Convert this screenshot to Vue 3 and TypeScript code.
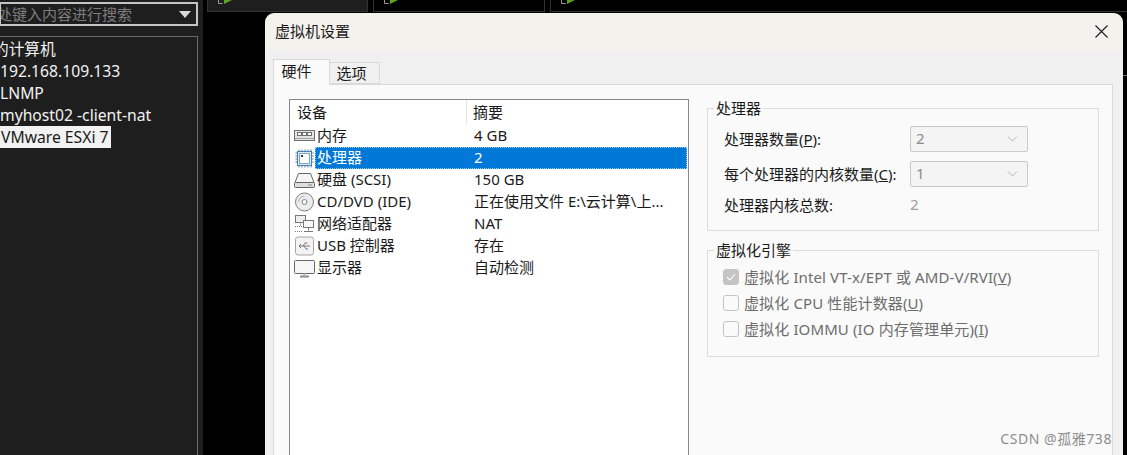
<script setup lang="ts">
const machines = ['192.168.109.133', 'LNMP', 'myhost02 -client-nat']
const rows = [
  { icon: 'mem', name: '内存', sum: '4 GB' },
  { icon: 'cpu', name: '处理器', sum: '2', sel: true },
  { icon: 'disk', name: '硬盘 (SCSI)', sum: '150 GB' },
  { icon: 'cd', name: 'CD/DVD (IDE)', sum: '正在使用文件 E:\\云计算\\上...' },
  { icon: 'net', name: '网络适配器', sum: 'NAT' },
  { icon: 'usb', name: 'USB 控制器', sum: '存在' },
  { icon: 'mon', name: '显示器', sum: '自动检测' },
]
</script>

<template>
  <div class="page">
    <aside class="side">
      <div class="search">
        <span class="search-text">处键入内容进行搜索</span>
        <span class="tri"></span>
      </div>
      <div class="tree">
        <div class="tree-row first">的计算机</div>
        <div v-for="m in machines" :key="m" class="tree-row">{{ m }}</div>
        <div class="tree-row"><span class="picked">VMware ESXi 7</span></div>
      </div>
    </aside>
    <main class="desk">
      <div class="strip">
        <div class="thumb t1"><svg width="16" height="5" viewBox="0 0 16 5"><path d="M.5 0v3.5h4" fill="none" stroke="#9a9a9a"/><path d="M6 0h8L6 4z" fill="#5da423"/></svg></div>
        <div class="thumb t2"><svg width="16" height="5" viewBox="0 0 16 5"><path d="M.5 0v3.5h4" fill="none" stroke="#9a9a9a"/><path d="M6 0h8L6 4z" fill="#5da423"/></svg></div>
        <div class="thumb t3"><svg width="16" height="5" viewBox="0 0 16 5"><path d="M.5 0v3.5h4" fill="none" stroke="#9a9a9a"/><path d="M6 0h8L6 4z" fill="#5da423"/></svg></div>
      </div>
      <section class="dialog">
        <header class="title">
          <span>虚拟机设置</span>
          <svg class="close" width="13" height="13" viewBox="0 0 13 13"><path d="M.5.5l12 12M12.5.5l-12 12" stroke="#1a1a1a" stroke-width="1.1" fill="none"/></svg>
        </header>
        <div class="body">
          <div class="tabs">
            <div class="tab on">硬件</div>
            <div class="tab">选项</div>
          </div>
          <div class="panel">
            <div class="list">
              <div class="list-head">
                <span class="c1">设备</span>
                <span class="c2">摘要</span>
              </div>
              <div v-for="r in rows" :key="r.name" class="list-row" :class="{ sel: r.sel }">
                <svg class="ico" width="21" height="20" viewBox="0 0 21 20">
                  <g v-if="r.icon === 'mem'" fill="none" stroke="#6f6f6f">
                    <rect x=".5" y="4.5" width="20" height="10" fill="#e4e4e4"/>
                    <rect x="3.5" y="6.5" width="4" height="3" fill="#fff"/>
                    <rect x="8.5" y="6.5" width="4" height="3" fill="#fff"/>
                    <rect x="13.5" y="6.5" width="4" height="3" fill="#fff"/>
                    <path d="M1 12.5h19" stroke="#a5a5a5"/>
                  </g>
                  <g v-else-if="r.icon === 'cpu'" fill="none">
                    <rect x="3.5" y="3.5" width="14" height="14" fill="#dcebf7" stroke="#4d7fa8"/>
                    <rect x="5.5" y="5.5" width="10" height="10" fill="#fff" stroke="#7ea6c6"/>
                    <path d="M5 1.5v2M8 1.5v2M11 1.5v2M14 1.5v2M17 1.5v2M5 17.5v2M8 17.5v2M11 17.5v2M14 17.5v2M17 17.5v2M1.5 5h2M1.5 8h2M1.5 11h2M1.5 14h2M17.5 5h2M17.5 8h2M17.5 11h2M17.5 14h2" stroke="#4d7fa8"/>
                    <rect x="7" y="7" width="2" height="2" fill="#333"/>
                  </g>
                  <g v-else-if="r.icon === 'disk'" fill="none" stroke="#666">
                    <path d="M4.5 3.5h12l3.5 9H1z" fill="#f5f5f5"/>
                    <rect x=".5" y="12.5" width="20" height="5" rx="1" fill="#dedede"/>
                    <path d="M14 15h4" stroke="#888"/>
                  </g>
                  <g v-else-if="r.icon === 'cd'" fill="none" stroke="#808080">
                    <circle cx="10.5" cy="10" r="9" fill="#ececec"/>
                    <circle cx="10.5" cy="10" r="2.5" fill="#fff"/>
                    <path d="M4.5 10a6 6 0 0 1 6-6" stroke="#b0b0b0"/>
                  </g>
                  <g v-else-if="r.icon === 'net'" fill="none" stroke="#777">
                    <rect x="1.5" y="1.5" width="10" height="7" fill="#eee"/>
                    <rect x="9.5" y="6.5" width="10" height="7" fill="#f6f6f6"/>
                    <path d="M14.5 13.5v3M10 17.5h9"/>
                    <path d="M6.5 8.5v3M1 12.5h7M1 17.5h7" stroke-dasharray="1 1"/>
                  </g>
                  <g v-else-if="r.icon === 'usb'" fill="none" stroke="#777">
                    <rect x="1.5" y="1" width="18" height="18" rx="2.5" fill="#f3f3f3" stroke="#a5a5a5"/>
                    <path d="M5 10h11M7 8l-2 2 2 2M9 10l2-3h2.5M10 10l2 3h2"/>
                  </g>
                  <g v-else fill="none" stroke="#666">
                    <rect x=".5" y="2.5" width="20" height="13" rx="1" fill="#f6f6f6"/>
                    <path d="M6 18.5h9" stroke-width="2" stroke="#8a8a8a"/>
                    <path d="M9 15.5h3v2H9z" fill="#bbb" stroke="none"/>
                  </g>
                </svg>
                <div class="cell">
                  <span class="name">{{ r.name }}</span>
                  <span class="sum">{{ r.sum }}</span>
                </div>
              </div>
            </div>
            <div class="right">
              <fieldset class="group g1">
                <legend>处理器</legend>
                <div class="form-row">
                  <label>处理器数量(<u>P</u>):</label>
                  <div class="combo"><span>2</span><svg width="11" height="6" viewBox="0 0 11 6"><path d="M1 .5l4.5 4.5L10 .5" fill="none" stroke="#b5b5b5"/></svg></div>
                </div>
                <div class="form-row">
                  <label>每个处理器的内核数量(<u>C</u>):</label>
                  <div class="combo"><span>1</span><svg width="11" height="6" viewBox="0 0 11 6"><path d="M1 .5l4.5 4.5L10 .5" fill="none" stroke="#b5b5b5"/></svg></div>
                </div>
                <div class="form-row total">
                  <label>处理器内核总数:</label>
                  <span class="val">2</span>
                </div>
              </fieldset>
              <fieldset class="group g2">
                <legend>虚拟化引擎</legend>
                <div class="check"><span class="box on"><svg width="10" height="8" viewBox="0 0 10 8"><path d="M1 4l3 3 5-6" fill="none" stroke="#fff" stroke-width="1.1"/></svg></span>虚拟化 Intel VT-x/EPT 或 AMD-V/RVI(<u>V</u>)</div>
                <div class="check"><span class="box"></span>虚拟化 CPU 性能计数器(<u>U</u>)</div>
                <div class="check"><span class="box"></span>虚拟化 IOMMU (IO 内存管理单元)(<u>I</u>)</div>
              </fieldset>
            </div>
          </div>
        </div>
      </section>
    </main>
    <div class="mark">CSDN @孤雅738</div>
    <div class="edge"></div>
  </div>
</template>

<style>
html, body { margin: 0; background: #000; }
</style>

<style scoped>
.page {
  width: 1127px; height: 455px; display: flex; overflow: hidden; position: relative;
  background: #000;
  font-family: "Noto Sans", "Noto Sans CJK SC", sans-serif;
  font-size: 15px; color: #1a1a1a;
}
.side { width: 203px; height: 455px; flex: none; background: #1e1e1e; box-sizing: border-box; overflow: hidden; padding-top: 2px; }
.search { height: 24px; width: 199px; margin-left: -1px; box-sizing: border-box; border: 2px solid #c4c4c4; display: flex; align-items: center; justify-content: space-between; padding-right: 5px; overflow: hidden; }
.search-text { color: #7d7d7d; font-size: 15px; margin-left: -4px; white-space: nowrap; line-height: 20px; }
.tri { width: 0; height: 0; border-left: 6px solid transparent; border-right: 6px solid transparent; border-top: 7px solid #d8d8d8; }
.tree { margin-top: 10px; width: 199px; height: 430px; margin-left: -1px; box-sizing: border-box; border: 1px solid #6a6a6a; padding-top: 1px; color: #f2f2f2; font-size: 15.7px; overflow: hidden; }
.tree-row { height: 22px; line-height: 22px; white-space: nowrap; }
.tree-row.first { margin-left: -7px; }
.picked { display: inline-block; background: #f2f2f2; color: #1a1a1a; height: 22px; padding: 0 2px 0 1px; }
.desk { flex: 1; min-width: 0; height: 455px; display: flex; flex-direction: column; padding-left: 4px; box-sizing: border-box; }
.strip { height: 12px; display: flex; flex: none; gap: 5px; }
.thumb { height: 12px; box-sizing: border-box; overflow: hidden; border-right: 1px solid #333; border-bottom: 1px solid #333; padding-left: 11px; }
.thumb svg { display: block; }
.t1 { width: 161px; background: #1e1e1e; border-left: 1px solid #333; padding-left: 10px; }
.t2 { width: 172px; border-left: 1px solid #333; padding-left: 10px; }
.t3 { flex: 1; border-left: 1px solid #333; padding-left: 10px; border-right: 0; }
.dialog { margin-left: 58px; width: 858px; margin-top: 1px; flex: 1; border-radius: 9px 9px 0 0; background: #f5f1ed; display: flex; flex-direction: column; box-sizing: border-box; overflow: hidden; }
.title { height: 37px; flex: none; display: flex; justify-content: space-between; align-items: center; padding: 0 15px 2px 10px; box-sizing: border-box; }
.close { display: block; margin-top: 2px; }
.body { flex: 1; background: #f0f0f0; padding-top: 9px; padding-left: 8px; box-sizing: border-box; display: flex; flex-direction: column; }
.tabs { display: flex; height: 25px; align-items: flex-end; flex: none; position: relative; z-index: 1; }
.tab { width: 50px; height: 22px; line-height: 20px; text-align: center; background: #f0f0f0; border: 1px solid #d9d9d9; border-left: 0; box-sizing: border-box; padding-right: 6px; }
.tab.on { width: 57px; height: 26px; background: #fafafa; border-left: 1px solid #d9d9d9; border-bottom: 0; margin-bottom: -1px; line-height: 22px; padding-right: 10px; }
.panel { flex: 1; background: #fafafa; border: 1px solid #d9d9d9; border-bottom: 0; display: flex; box-sizing: border-box; padding: 14px 0 0 15px; width: 840px; }
.list { width: 400px; flex: none; height: 400px; box-sizing: border-box; background: #fff; border: 1px solid #828790; }
.list-head { display: flex; height: 25px; line-height: 25px; }
.c1 { width: 177px; padding-left: 7px; box-sizing: border-box; border-right: 1px solid #e5e5e5; height: 24px; }
.c2 { padding-left: 6px; }
.list-row { display: flex; height: 22px; align-items: center; white-space: nowrap; }
.ico { flex: none; margin-left: 4px; }
.cell { flex: 1; display: flex; height: 22px; line-height: 21px; margin-right: 1px; box-sizing: border-box; }
.name { width: 159px; padding-left: 2px; flex: none; box-sizing: border-box; }
.list-row.sel .cell { background: #0078d7; color: #fff; outline: 1px dotted #9cc6ea; outline-offset: -1px; }
.right { margin-left: 18px; width: 392px; flex: none; display: flex; flex-direction: column; }
.group { margin: 0; padding: 0 0 0 16px; border: 1px solid #dcdcdc; box-sizing: border-box; width: 392px; min-width: 0; }
.group legend { margin-left: -10px; padding: 0 2px; line-height: 16px; }
.g1 { height: 131px; margin-top: 1px; padding-top: 10px; }
.g2 { height: 115px; margin-top: 11px; padding-top: 7px; }
.form-row { display: flex; align-items: center; height: 26px; margin-bottom: 9px; }
.form-row label { width: 186px; flex: none; white-space: nowrap; padding-bottom: 2px; }
.form-row.total { margin-bottom: 0; height: 18px; }
.combo { width: 118px; height: 26px; box-sizing: border-box; border: 1px solid #c8c8c8; border-radius: 2px; background: #f4f4f4; display: flex; justify-content: space-between; align-items: center; padding: 0 9px 2px 5px; color: #8a8a8a; }
.combo svg { margin-top: 2px; }
.val { color: #a0a0a0; padding-bottom: 2px; }
.check { display: flex; align-items: center; height: 26px; color: #6d6d6d; white-space: pre; line-height: 24px; letter-spacing: 0.12px; padding-bottom: 2px; box-sizing: border-box; }
.box { width: 16px; height: 16px; box-sizing: border-box; border: 1px solid #c4c4c4; border-radius: 3px; margin: 0 5px 0 -1px; background: #fafafa; display: flex; align-items: center; justify-content: center; flex: none; }
.box.on { background: #c4c4c4; }
.mark { position: absolute; right: 15px; top: 428px; font-size: 14px; color: #8d8d8d; letter-spacing: 0.55px; }
.edge { position: absolute; left: 1123px; top: 75px; width: 4px; height: 1px; background: #6a6a6a; }
</style>
